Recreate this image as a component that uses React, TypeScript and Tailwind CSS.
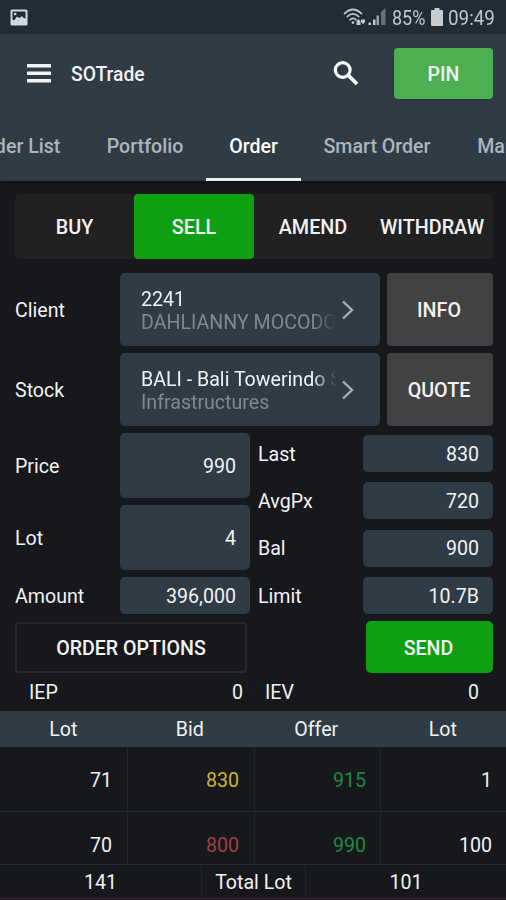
import type { ReactNode } from "react";

const tabs = [
  { label: "Order List", className: "w-[144px] -ml-[60px] pl-[11px]" },
  { label: "Portfolio", className: "w-[122px]" },
  { label: "Order", className: "w-[95px]", active: true },
  { label: "Smart Order", className: "w-[152px]" },
  { label: "Market", className: "w-[110px]" },
];

const sides = ["BUY", "SELL", "AMEND", "WITHDRAW"];

const stats = [
  { label: "Last", value: "830" },
  { label: "AvgPx", value: "720" },
  { label: "Bal", value: "900" },
  { label: "Limit", value: "10.7B" },
];

const book = [
  { bidLot: "71", bid: "830", bidColor: "text-[#cfb32f]", offer: "915", offerLot: "1" },
  { bidLot: "70", bid: "800", bidColor: "text-[#9e4042]", offer: "990", offerLot: "100" },
];

function StatusBar() {
  return (
    <div className="flex h-[34px] shrink-0 items-center justify-between bg-[#222c34] pl-[10px] pr-[11px] text-[#c3c7ca]">
      <svg width="18" height="17" viewBox="0 0 18 17">
        <rect x="0.5" y="0.5" width="17" height="16" rx="1.5" fill="#d3d6db" />
        <path d="M2.500 2.500h13v7l-1.800-.500-2-2-2.200 2.200-2.500-1.700-2.500 3.500h-2z" fill="#222c34" />
        <circle cx="5.200" cy="5" r="1.300" fill="#d3d6db" />
      </svg>
      <div className="flex items-center">
        <svg width="44" height="20" viewBox="0 0 44 20" fill="none">
          <g stroke="#c3c7ca" strokeWidth="1.700" strokeLinecap="round">
            <path d="M1.500 6.600Q10 -1.600 18.500 6.600" />
            <path d="M4.300 9.700Q10 4.200 15.700 9.700" />
            <path d="M7 12.800Q10 9.800 13 12.800" />
          </g>
          <circle cx="10" cy="15.600" r="1.400" fill="#c3c7ca" />
          <path d="M13.500 14.500l2-2.500 2 2.500v3.500h-4zM18 12.500h4v2.500l-2 2.200-2-2.200z" fill="#c3c7ca" />
          <path d="M25.500 15.500H28V18h-2.500zM30 12.500h2.500V18H30z" fill="#c3c7ca" />
          <path d="M33.500 8.500H36V18h-2.500z" fill="#9ca2a7" />
          <path d="M38 5l4.500-4v17H38z" fill="#687178" />
        </svg>
        <span className="ml-[5px] w-[34px] origin-left scale-x-[0.9] whitespace-nowrap pt-px text-[20px] leading-none">
          85%
        </span>
        <svg className="ml-[5px]" width="12" height="18" viewBox="0 0 12 18" fill="#c9cdd0">
          <path d="M3.500 0h5v2H11a1 1 0 0 1 1 1v14a1 1 0 0 1-1 1H1a1 1 0 0 1-1-1V3a1 1 0 0 1 1-1h2.500z" />
        </svg>
        <span className="ml-[5px] w-[47px] origin-left scale-x-[0.94] whitespace-nowrap pt-px text-[20px] leading-none">
          09:49
        </span>
      </div>
    </div>
  );
}

function Toolbar() {
  return (
    <div className="flex h-[79px] items-center pl-[27px] pr-[13px]">
      <svg width="24" height="19" viewBox="0 0 24 19" fill="#f1f3f5">
        <rect y="0" width="24" height="3.600" rx="0.5" />
        <rect y="7.500" width="24" height="3.600" rx="0.5" />
        <rect y="15" width="24" height="3.600" rx="0.5" />
      </svg>
      <h1 className="ml-[20px] pt-[3px] text-[19.300px] font-medium">SOTrade</h1>
      <svg className="ml-auto mr-[35px]" width="26" height="26" viewBox="0 0 26 26" fill="none" stroke="#fff">
        <circle cx="9.700" cy="9" r="7.400" strokeWidth="3.200" />
        <path d="M15 14l9 9" strokeWidth="3.800" />
      </svg>
      <button
        type="button"
        className="h-[51px] w-[99px] rounded-[4px] bg-[#4caf50] pt-[3px] text-[19.500px] font-medium shadow"
      >
        PIN
      </button>
    </div>
  );
}

function Picker({ title, subtitle }: { title: string; subtitle: string }) {
  return (
    <div className="flex h-[73px] w-[260px] items-center rounded-[5px] bg-[#2f3c46] pl-[21px]">
      <div className="w-[195px] overflow-hidden whitespace-nowrap pt-[2px] text-[19.6px] leading-[23px] [mask-image:linear-gradient(to_right,#000_88%,transparent)]">
        <div>{title}</div>
        <div className="text-[#7f8991]">{subtitle}</div>
      </div>
      <svg className="ml-[5px]" width="14" height="20" viewBox="0 0 14 20" fill="none" stroke="#aab0b5" strokeWidth="2.400">
        <path d="M2 1.500L11 10l-9 8.500" />
      </svg>
    </div>
  );
}

function GreyButton({ children }: { children: ReactNode }) {
  return (
    <button
      type="button"
      className="ml-[7px] h-[73px] w-[106px] rounded-[4px] bg-[#424242] pt-[2px] pr-[2px] text-[19.7px] font-medium"
    >
      {children}
    </button>
  );
}

function Field({ label, value, className }: { label: string; value: string; className: string }) {
  return (
    <div className="flex items-center">
      <span className="w-[105px] pt-[2px]">{label}</span>
      <div className={`flex w-[130px] items-center justify-end rounded-[5px] bg-[#2f3c46] pt-[2px] pr-[14px] ${className}`}>
        {value}
      </div>
    </div>
  );
}

function OrderBook() {
  return (
    <div className="flex flex-1 flex-col">
      <div className="grid h-[36px] grid-cols-4 items-center bg-[#2f3c46] pt-[2px] text-center">
        <span>Lot</span>
        <span>Bid</span>
        <span>Offer</span>
        <span>Lot</span>
      </div>
      <div className="h-[117px] overflow-hidden">
        {book.map((row) => (
          <div
            key={row.bid}
            className="grid h-[65px] grid-cols-[128px_127px_126px_125px] divide-x divide-[#23252c] border-b border-[#272a32] text-right leading-[68px]"
          >
            <span className="pr-[15px]">{row.bidLot}</span>
            <span className={`pr-[15px] ${row.bidColor}`}>{row.bid}</span>
            <span className="pr-[14px] text-[#1d8b42]">{row.offer}</span>
            <span className="pr-[14px]">{row.offerLot}</span>
          </div>
        ))}
      </div>
      <div className="flex h-[35px] items-center border-y border-[#272a32] text-center leading-[33px]">
        <span className="h-[33px] w-[201px] pt-px">141</span>
        <span className="h-[33px] w-[105px] border-x border-[#23252c] pt-px">Total Lot</span>
        <span className="h-[33px] w-[200px] pt-px">101</span>
      </div>
      <div className="flex-1 bg-[#1b0d1d]" />
    </div>
  );
}

export default function App() {
  return (
    <div className="flex h-[900px] w-[506px] flex-col overflow-hidden bg-[#17181c] font-[Roboto,sans-serif] text-[19.6px] text-[#f1f2f3]">
      <StatusBar />

      <header className="h-[147px] shrink-0 bg-[#2f3c46] shadow-[0_2px_4px_rgba(0,0,0,0.35)]">
        <Toolbar />
        <nav className="flex h-[68px] overflow-hidden text-[19.6px] font-medium">
          {tabs.map((tab) => (
            <div
              key={tab.label}
              className={`flex shrink-0 justify-center whitespace-nowrap border-b-[3px] pt-[19px] ${tab.className} ${
                tab.active ? "border-[#eceef0] text-white" : "border-transparent text-[#adb4ba]"
              }`}
            >
              {tab.label}
            </div>
          ))}
        </nav>
      </header>

      <main className="flex flex-1 flex-col pt-[13px]">
        <div className="mx-[15px] grid h-[65px] w-[478px] grid-cols-[119px_120px_118px_120px] rounded-[5px] bg-[#212121] text-[19.8px] font-medium">
          {sides.map((side) => (
            <button
              key={side}
              type="button"
              className={`rounded-[4px] pt-[2px] ${side === "SELL" ? "bg-[#0f9f13]" : ""}`}
            >
              {side}
            </button>
          ))}
        </div>

        <div className="mt-[14px] flex flex-col gap-[7px] pl-[15px]">
          <div className="flex items-center">
            <span className="w-[105px] pt-[2px]">Client</span>
            <Picker title="2241" subtitle="DAHLIANNY MOCODOMPIS" />
            <GreyButton>INFO</GreyButton>
          </div>
          <div className="flex items-center">
            <span className="w-[105px] pt-[2px]">Stock</span>
            <Picker title="BALI - Bali Towerindo Sentra" subtitle="Infrastructures" />
            <GreyButton>QUOTE</GreyButton>
          </div>
        </div>

        <div className="mt-[7px] flex px-[15px]">
          <div className="flex flex-col gap-[7px]">
            <Field label="Price" value="990" className="h-[65px]" />
            <Field label="Lot" value="4" className="h-[65px]" />
            <Field label="Amount" value="396,000" className="h-[37px]" />
          </div>
          <div className="ml-[8px] flex flex-col justify-between pt-[2px]">
            {stats.map((stat) => (
              <Field key={stat.label} {...stat} className="h-[37px]" />
            ))}
          </div>
        </div>

        <div className="mt-[7px] flex items-center justify-between pl-[15px] pr-[13px] text-[19.6px] font-medium">
          <button type="button" className="h-[51px] w-[232px] rounded-[4px] border-2 border-[#27282c] pt-[3px]">
            ORDER OPTIONS
          </button>
          <button type="button" className="h-[52px] w-[127px] rounded-[5px] bg-[#0f9f13] pt-[3px] pr-[2px]">
            SEND
          </button>
        </div>

        <div className="flex h-[38px] items-center pl-[29px] pr-[27px] pt-[2px]">
          <span>IEP</span>
          <span className="ml-auto">0</span>
          <span className="ml-[22px] w-[203px]">IEV</span>
          <span>0</span>
        </div>

        <OrderBook />
      </main>
    </div>
  );
}
